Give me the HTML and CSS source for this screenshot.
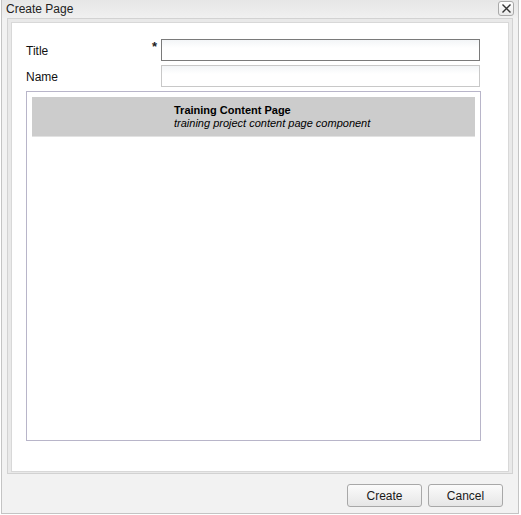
FILE: index.html
```html
<!DOCTYPE html>
<html>
<head>
<meta charset="utf-8">
<link rel="stylesheet" href="styles.css">
</head>
<body>
<div class="dialog">
  <div class="titlebar">
    <span class="title">Create Page</span>
    <span class="close">
      <svg width="11" height="11" viewBox="0 0 11 11"><path d="M1.5 1.5 L9.5 9.5 M9.5 1.5 L1.5 9.5" stroke="#333" stroke-width="1.4" fill="none"/></svg>
    </span>
  </div>
  <div class="panel">
    <div class="panel-inner">
      <div class="form">
        <label class="lbl">Title</label>
        <span class="req">*</span>
        <div class="input focused"></div>
        <label class="lbl">Name</label>
        <span class="req"></span>
        <div class="input"></div>
      </div>
      <div class="list">
        <div class="item">
          <div class="item-title">Training Content Page</div>
          <div class="item-desc">training project content page component</div>
        </div>
      </div>
    </div>
  </div>
  <div class="buttons">
    <button class="btn">Create</button>
    <button class="btn">Cancel</button>
  </div>
</div>
</body>
</html>
```

FILE: styles.css
```css
html, body {
  margin: 0;
  padding: 0;
  background: #ffffff;
}
body {
  font-family: "Liberation Sans", Arial, sans-serif;
  color: #1a1a1a;
  width: 521px;
  height: 515px;
  overflow: hidden;
  position: relative;
}
.dialog {
  box-sizing: border-box;
  margin-left: 1px;
  width: 518px;
  height: 514px;
  border: 1px solid #c4c4c4;
  border-top: none;
  background: #f2f2f2;
  display: flex;
  flex-direction: column;
}
.titlebar {
  height: 18px;
  display: flex;
  align-items: center;
  justify-content: space-between;
  padding: 0 4px 0 4px;
  background: linear-gradient(#e6e6e6, #f0f0f0);
}
.title {
  font-size: 12px;
  color: #222;
  padding-top: 0;
}
.close {
  box-sizing: border-box;
  width: 16px;
  height: 15px;
  border: 1px solid #a9a9a9;
  border-radius: 3px;
  background: linear-gradient(#ffffff, #e9e9e9);
  display: flex;
  align-items: center;
  justify-content: center;
  margin-top: -2px;
}
.panel {
  margin: 0 5px 0 5px;
  border: 1px solid #d2d2d2;
  padding: 3px 3px 1px 3px;
  background: #e9e9e9;
}
.panel-inner {
  border: 1px solid #d8d8d8;
  background: #ffffff;
  padding: 16px 27px 30px 14px;
}
.form {
  display: grid;
  grid-template-columns: 125px 10px 319px;
  grid-auto-rows: 22px;
  row-gap: 4px;
  align-items: center;
}
.lbl {
  font-size: 12px;
  color: #111;
  padding-top: 1px;
}
.req {
  font-size: 13px;
  font-weight: bold;
  color: #222;
  align-self: start;
  margin-top: 0px;
  padding-left: 1px;
}
.input {
  box-sizing: border-box;
  height: 22px;
  border: 1px solid #c8c8c8;
  background: linear-gradient(#f3f5f7, #ffffff 8px);
}
.input.focused {
  border-color: #7a7a7a;
}
.list {
  box-sizing: border-box;
  margin-top: 4px;
  height: 350px;
  border: 1px solid #b8b5c9;
  padding: 5px;
}
.item {
  background: #cccccc;
  padding: 7px 0 7px 142px;
  height: 40px;
  box-sizing: border-box;
  font-size: 11px;
  line-height: 13px;
  color: #000;
  border-bottom: 1px solid #e2e2e2;
}
.item-title {
  font-weight: bold;
}
.item-desc {
  font-style: italic;
}
.buttons {
  display: flex;
  justify-content: flex-end;
  gap: 6px;
  padding: 10px 15px 0 0;
}
.btn {
  box-sizing: border-box;
  width: 75px;
  height: 23px;
  border: 1px solid #a8a8a8;
  border-radius: 3px;
  background: linear-gradient(#fbfbfb, #e6e6e6);
  font-family: "Liberation Sans", Arial, sans-serif;
  font-size: 12px;
  color: #1a1a1a;
  padding: 0;
}
```
